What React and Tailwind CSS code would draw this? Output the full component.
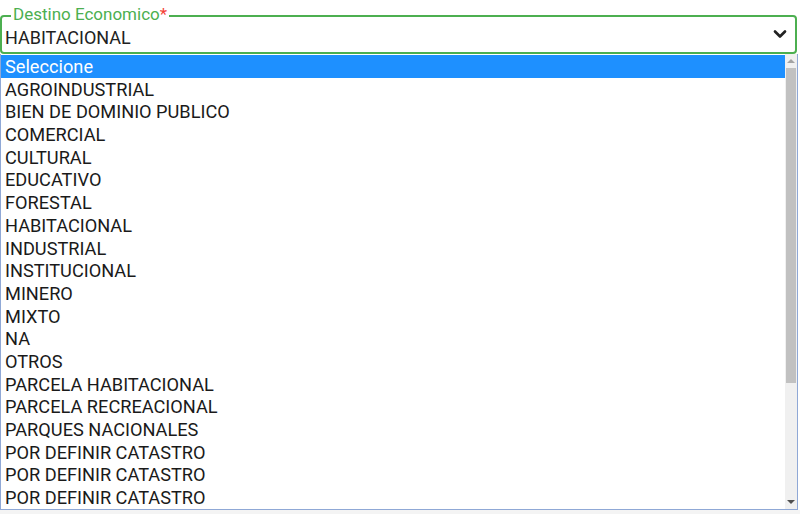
import { ChevronDown } from 'lucide-react';

const options = [
  'Seleccione',
  'AGROINDUSTRIAL',
  'BIEN DE DOMINIO PUBLICO',
  'COMERCIAL',
  'CULTURAL',
  'EDUCATIVO',
  'FORESTAL',
  'HABITACIONAL',
  'INDUSTRIAL',
  'INSTITUCIONAL',
  'MINERO',
  'MIXTO',
  'NA',
  'OTROS',
  'PARCELA HABITACIONAL',
  'PARCELA RECREACIONAL',
  'PARQUES NACIONALES',
  'POR DEFINIR CATASTRO',
  'POR DEFINIR CATASTRO',
  'POR DEFINIR CATASTRO',
];

const App = () => {
  return (
    <div className="w-[800px] h-[515px] bg-white overflow-hidden font-['Roboto',sans-serif] text-[#212121]">
      {/* Select field */}
      <div className="pt-[15px] w-[797px]">
        <div className="relative h-[39px] border-2 border-[#4caf50] rounded-[4px] flex items-center pl-[3px] pr-[5px]">
          <span className="absolute -top-[13px] left-[9px] bg-white px-[2px] text-[17px] leading-[20px] text-[#4caf50]">
            Destino Economico<span className="text-[#f44336]">*</span>
          </span>
          <span className="flex-1 text-[18px] leading-[22px] pt-[7px]">HABITACIONAL</span>
          <ChevronDown size={20} strokeWidth={3.2} className="text-[#222] mt-[-1px]" />
        </div>
      </div>

      {/* Open listbox */}
      <div className="w-[798px] h-[456px] border border-t-0 border-[#8fa8d6] flex">
        <div className="flex-1 pt-[1px]">
          {options.map((opt, i) => (
            <div
              key={i}
              className={`h-[22.7px] leading-[24px] pl-[4px] text-[18.2px] whitespace-nowrap ${
                i === 0 ? 'bg-[#1e90ff] text-white' : 'text-[#1a1a1a]'
              }`}
            >
              {opt}
            </div>
          ))}
        </div>
        <div className="w-[12px] bg-[#f0f0f0] flex flex-col items-center">
          <div className="h-[14px] flex items-center justify-center">
            <div className="w-0 h-0 border-l-[4px] border-r-[4px] border-b-[4px] border-l-transparent border-r-transparent border-b-[#a3a3a3]" />
          </div>
          <div className="w-[10px] h-[315px] bg-[#c1c1c1]" />
          <div className="flex-1" />
          <div className="h-[14px] flex items-center justify-center">
            <div className="w-0 h-0 border-l-[4px] border-r-[4px] border-t-[4px] border-l-transparent border-r-transparent border-t-[#505050]" />
          </div>
        </div>
      </div>
      <div className="h-[4px] bg-[#f4f4f4]" />
    </div>
  );
};

export default App;
